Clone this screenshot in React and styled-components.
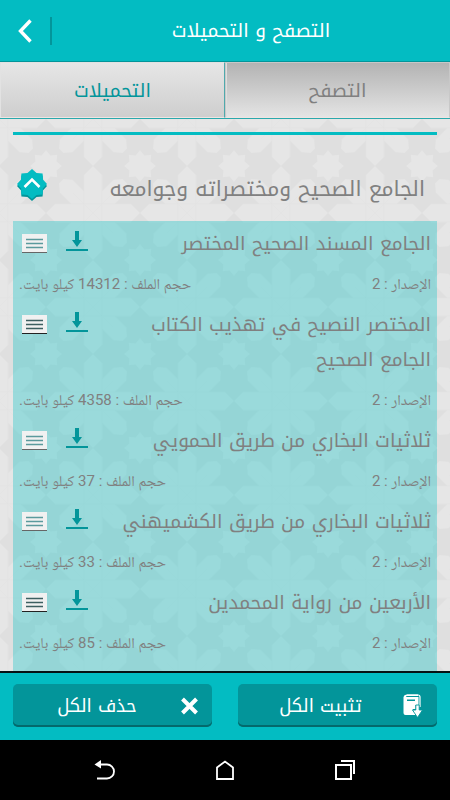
import React from "react";
import styled, { createGlobalStyle } from "styled-components";

const KUFI = '"Noto Kufi Arabic", "Noto Sans", "DejaVu Sans", sans-serif';
const NASKH = 'Roboto, "Noto Naskh Arabic", "Noto Sans", "DejaVu Sans", sans-serif';

const tile = `<svg xmlns="http://www.w3.org/2000/svg" width="94" height="94" viewBox="0 0 94 94">
<rect width="94" height="94" fill="#dfdfdf"/>
<defs>
<polygon id="p" points="0,-9 38,-9 47,0 38,9 0,9"/>
<polygon id="d" points="0,-9 38,-9 45,-3 45,3 38,9 0,9"/>
<g id="f" fill="#e6e6e6">
<use href="#d" transform="rotate(45)"/><use href="#d" transform="rotate(135)"/><use href="#d" transform="rotate(225)"/><use href="#d" transform="rotate(315)"/>
<use href="#p"/><use href="#p" transform="rotate(90)"/><use href="#p" transform="rotate(180)"/><use href="#p" transform="rotate(270)"/>
<path d="M-20,-20 L20,20 M-20,20 L20,-20 M-9,-38 V38 M9,-38 V38 M-38,-9 H38 M-38,9 H38" fill="none" stroke="#e2e2e2" stroke-width="0.6"/>
</g>
</defs>
<use href="#f"/><use href="#f" x="94"/><use href="#f" y="94"/><use href="#f" x="94" y="94"/>
<path fill="#e6e6e6" d="M47,31 L51.4,36.4 L58.3,35.7 L57.6,42.6 L63,47 L57.6,51.4 L58.3,58.3 L51.4,57.6 L47,63 L42.6,57.6 L35.7,58.3 L36.4,51.4 L31,47 L36.4,42.6 L35.7,35.7 L42.6,36.4 Z"/>
</svg>`;

const patternUrl = `data:image/svg+xml,${encodeURIComponent(tile)}`;

const GlobalStyle = createGlobalStyle`
  * { box-sizing: border-box; }
  body { margin: 0; background: #000; }
  button { border: 0; padding: 0; margin: 0; background: none; font: inherit; color: inherit; cursor: pointer; }
  h1, h2, h3, p, ul { margin: 0; padding: 0; font-weight: inherit; }
  svg { display: block; }
`;

const Page = styled.div`
  display: flex;
  flex-direction: column;
  height: 100vh;
  font-family: ${KUFI};
  color: #808080;
`;

const Header = styled.header`
  flex: none;
  display: flex;
  align-items: center;
  height: 62px;
  background: #03bcc2;
  border-bottom: 1px solid #03959a;
  color: #fff;
`;

const Title = styled.h1`
  flex: 1;
  text-align: center;
  font-size: 19px;
  font-weight: 400;
  line-height: 32px;
`;

const BackButton = styled.button`
  display: flex;
  align-items: center;
  justify-content: center;
  width: 52px;
  height: 28px;
  border-right: 2px solid #03959a;
`;

const Tabs = styled.div`
  flex: none;
  display: grid;
  grid-template-columns: 1fr 1fr;
  height: 57px;
  border-bottom: 1px solid #2aa9ac;
`;

const Tab = styled.button`
  padding-top: 2px;
  border: 1px solid ${(p) => (p.$active ? "#e2e2e2" : "#c8c8c8")};
  border-bottom-color: #f0e4e2;
  border-right-color: ${(p) => (p.$active ? "#4fa9ac" : "#c8c8c8")};
  color: ${(p) => (p.$active ? "#03959a" : "#808080")};
  background: ${(p) =>
    p.$active
      ? "linear-gradient(#e6e6e6, #cecece)"
      : "linear-gradient(#b3b3b3, #e4e4e4)"};
  box-shadow: ${(p) => (p.$active ? "none" : "inset 1px 0 #dedede")};
  font-size: 19px;
  line-height: 32px;
`;

const Content = styled.main`
  flex: 1;
  min-height: 0;
  overflow-y: auto;
  scrollbar-width: none;
  padding: 13px 13px 0;
  background: #e6e6e6 url("${patternUrl}") -1px 0 / 94px 94px;
`;

const SectionHeader = styled.div`
  display: flex;
  align-items: center;
  justify-content: space-between;
  height: 89px;
  padding: 14px 12px 0 4px;
  border-top: 3px solid #03bcc2;
`;

const SectionTitle = styled.h2`
  font-size: 21px;
  line-height: 36px;
  padding-top: 8px;
`;

const BookList = styled.ul`
  list-style: none;
  padding-top: 6px;
  background: rgba(0, 194, 198, 0.33);
`;

const Book = styled.li`
  display: grid;
  grid-template-columns: 1fr auto;
  min-height: 81px;
  padding: 0 6px;
`;

const BookTitle = styled.h3`
  padding-left: 20px;
  font-size: 19px;
  line-height: 35px;
`;

const BookActions = styled.div`
  display: flex;
  align-items: flex-start;
  gap: 19px;
  padding: 4px 0 0 3px;
`;

const BookMeta = styled.div`
  grid-column: 1 / -1;
  display: flex;
  justify-content: space-between;
  height: 46px;
  padding: 10px 0;
  font-family: ${NASKH};
  font-size: 15px;
  line-height: 24px;
`;

const Footer = styled.footer`
  flex: none;
  display: grid;
  grid-template-columns: 1fr 1fr;
  gap: 26px;
  height: 69px;
  padding: 11px 13px 13px;
  background: #03bcc2;
  border-top: 2px solid #061214;
`;

const ActionButton = styled.button`
  display: flex;
  align-items: center;
  height: 43px;
  padding-right: 14px;
  border-radius: 5px;
  background: #03959a;
  box-shadow: inset 0 -2px #04696c;
  color: #fff;
  font-size: 18px;
  line-height: 32px;
`;

const ActionLabel = styled.span`
  flex: 1;
  text-align: center;
`;

const NavBar = styled.nav`
  flex: none;
  display: grid;
  grid-template-columns: repeat(3, 1fr);
  height: 60px;
  padding: 0 10%;
  background: #000;
`;

const NavButton = styled.button`
  display: flex;
  align-items: center;
  justify-content: center;
`;

function octagram(cx, cy, outer, inner) {
  return Array.from({ length: 16 }, (_, i) => {
    const r = i % 2 ? inner : outer;
    const a = (i * Math.PI) / 8;
    return `${(cx + r * Math.sin(a)).toFixed(2)},${(cy - r * Math.cos(a)).toFixed(2)}`;
  }).join(" ");
}

const BackIcon = () => (
  <svg width="14" height="24" viewBox="0 0 14 24">
    <path d="M12.500 1.500 L2.500 12 L12.500 22.500" fill="none" stroke="#fff" strokeWidth="3.400" />
  </svg>
);

const CollapseIcon = () => (
  <svg width="30" height="33" viewBox="0 0 30 33">
    <polygon points={octagram(15, 17, 15, 11.8)} fill="#03959a" />
    <polygon points={octagram(15, 15, 15, 11.8)} fill="#03bcc2" />
    <path d="M7.500 18 L15 10.500 L22.500 18" fill="none" stroke="#fff" strokeWidth="2.600" />
  </svg>
);

const DownloadIcon = () => (
  <svg width="22" height="20" viewBox="0 0 22 20">
    <path d="M9 0 H13 V9 H16 L11 16 L6 9 H9 Z" fill="#03959a" />
    <rect x="0" y="18" width="22" height="2" fill="#03959a" />
  </svg>
);

const MenuIcon = ({ dark }) => (
  <svg width="25" height="23" viewBox="0 0 25 23">
    <rect x="0" y="3" width="25" height="19" fill="#f1f1f1" />
    <rect x="0" y="21" width="25" height="1" fill={dark ? "#222" : "#666"} />
    <path d="M4 8.500 H21 M4 12.500 H21 M4 16.500 H21" stroke={dark ? "#3d5f61" : "#5b9a9d"} strokeWidth="1.300" />
  </svg>
);

const BookDownIcon = () => (
  <svg width="20" height="24" viewBox="0 0 20 24">
    <path d="M4 1 H15 Q17 1 17 3 V13" fill="none" stroke="#fff" strokeWidth="1.200" />
    <path fillRule="evenodd" d="M0.500 3 Q1 0.500 3.500 0.500 H15 V2 H3.500 Q2.500 2.500 3.500 3 H15.500 V11 H12.500 V15 H9.500 L13 20 V21 H2.500 Q0.500 21 0.500 19 Z M4 5.500 H12 V7 H4 Z" fill="#fff" />
    <path d="M12.800 11 H16.200 V16 H19.500 L14.500 23.500 L9.500 16 H12.800 Z" fill="#fff" stroke="#03959a" strokeWidth="0.900" />
  </svg>
);

const CrossIcon = () => (
  <svg width="17" height="18" viewBox="0 0 17 18">
    <path d="M1.500 2 L15.500 16 M15.500 2 L1.500 16" stroke="#fff" strokeWidth="4" />
  </svg>
);

const ReturnIcon = () => (
  <svg width="22" height="22" viewBox="0 0 22 22">
    <path d="M5 5.500 H13 A7 7 0 0 1 13 19.500 H3" fill="none" stroke="#fff" strokeWidth="1.800" />
    <path d="M0.500 5.500 L7 1 V9.500 Z" fill="#fff" />
  </svg>
);

const HomeIcon = () => (
  <svg width="20" height="22" viewBox="0 0 20 22">
    <path d="M2 8.500 L10 2.500 L18 8.500 V20 H2 Z" fill="none" stroke="#fff" strokeWidth="1.800" />
  </svg>
);

const RecentIcon = () => (
  <svg width="20" height="20" viewBox="0 0 20 20">
    <path d="M1 5 H16 V19 H1 Z" fill="none" stroke="#fff" strokeWidth="2" />
    <path d="M6 1 H19 V14" fill="none" stroke="#fff" strokeWidth="2" />
  </svg>
);

const books = [
  { title: "الجامع المسند الصحيح المختصر", size: 14312 },
  { title: "المختصر النصيح في تهذيب الكتاب الجامع الصحيح", size: 4358, dark: true },
  { title: "ثلاثيات البخاري من طريق الحمويي", size: 37 },
  { title: "ثلاثيات البخاري من طريق الكشميهني", size: 33 },
  { title: "الأربعين من رواية المحمدين", size: 85, dark: true },
  {},
];

export default function App() {
  return (
    <Page dir="rtl" lang="ar">
      <GlobalStyle />
      <Header>
        <Title>التصفح و التحميلات</Title>
        <BackButton aria-label="رجوع">
          <BackIcon />
        </BackButton>
      </Header>
      <Tabs role="tablist">
        <Tab role="tab" aria-selected="false">التصفح</Tab>
        <Tab role="tab" aria-selected="true" $active>التحميلات</Tab>
      </Tabs>
      <Content>
        <SectionHeader>
          <SectionTitle>الجامع الصحيح ومختصراته وجوامعه</SectionTitle>
          <button aria-label="طي" aria-expanded="true">
            <CollapseIcon />
          </button>
        </SectionHeader>
        <BookList>
          {books.map((book, i) => (
            <Book key={i}>
              <BookTitle>{book.title}</BookTitle>
              <BookActions>
                <button aria-label="تحميل">
                  <DownloadIcon />
                </button>
                <button aria-label="قائمة">
                  <MenuIcon dark={book.dark} />
                </button>
              </BookActions>
              {book.title && (
                <BookMeta>
                  <p>الإصدار : 2</p>
                  <p>حجم الملف : {book.size} كيلو بايت.</p>
                </BookMeta>
              )}
            </Book>
          ))}
        </BookList>
      </Content>
      <Footer>
        <ActionButton>
          <BookDownIcon />
          <ActionLabel>تثبيت الكل</ActionLabel>
        </ActionButton>
        <ActionButton>
          <CrossIcon />
          <ActionLabel>حذف الكل</ActionLabel>
        </ActionButton>
      </Footer>
      <NavBar dir="ltr">
        <NavButton aria-label="رجوع">
          <ReturnIcon />
        </NavButton>
        <NavButton aria-label="الرئيسية">
          <HomeIcon />
        </NavButton>
        <NavButton aria-label="الأخيرة">
          <RecentIcon />
        </NavButton>
      </NavBar>
    </Page>
  );
}
